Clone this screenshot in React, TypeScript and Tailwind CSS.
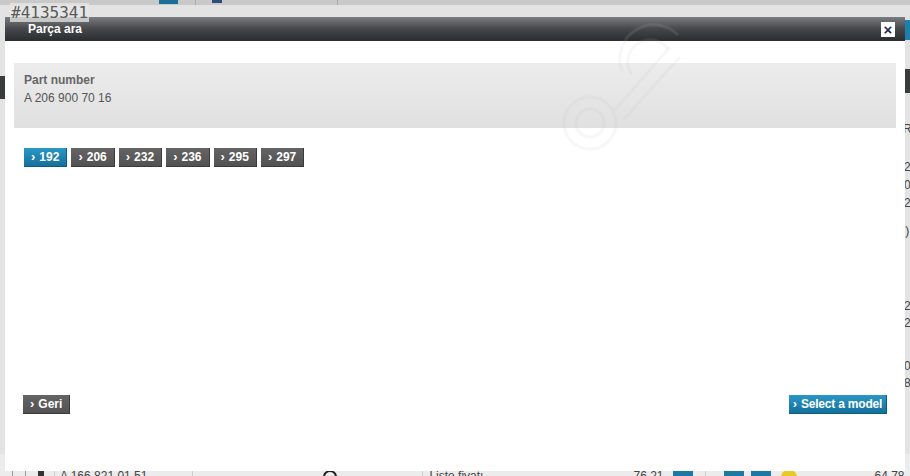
import React from 'react';

const models = ['192', '206', '232', '236', '295', '297'];

const NavButton: React.FC<{ label: string; active?: boolean; className?: string }> = ({ label, active, className }) => (
    <button
        className={
            'h-[19px] flex items-center justify-center gap-[4px] text-[12px] font-bold text-white leading-none border-b border-r ' +
            (active
                ? 'bg-gradient-to-b from-[#2a97c4] to-[#14719c] border-[#0e5a7e]'
                : 'bg-gradient-to-b from-[#646464] to-[#525252] border-[#3a3a3a]') +
            (className ? ' ' + className : ' px-[7px]')
        }
    >
        <span className="text-[13px] -mt-[1px]">›</span>
        <span>{label}</span>
    </button>
);

const Watermark: React.FC = () => (
    <svg className="absolute left-[505px] top-[-8px] pointer-events-none" width="190" height="150" viewBox="0 0 190 150" fill="none">
        <g stroke="rgba(190,190,190,0.13)" strokeWidth="3">
            <path d="M112 62 A34 34 0 0 1 168 26" />
            <path d="M122 66 A22 22 0 0 1 158 40" />
            <path d="M160 38 L104 102" />
            <path d="M170 48 L114 110" />
            <circle cx="80" cy="114" r="26" />
            <circle cx="80" cy="114" r="14" />
        </g>
    </svg>
);

const App: React.FC = () => {
    return (
        <div className="relative w-[910px] h-[476px] overflow-hidden bg-[#e3e3e3] font-['Liberation_Sans',Arial,sans-serif]">
            {/* page behind the dialog */}
            <div className="flex flex-col h-full">
                <div className="h-[5px] bg-[#c9c9c9] flex items-start shrink-0">
                    <div className="ml-[159px] w-[19px] h-[4px] bg-[#1b6f98]" />
                    <div className="ml-[17px] w-px h-[5px] bg-[#aaa]" />
                    <div className="ml-[16px] w-[10px] h-[3px] bg-[#2b4f7a]" />
                    <div className="ml-[115px] w-px h-[5px] bg-[#aaa]" />
                </div>
                <div className="flex-1 flex justify-between">
                    <div className="w-[5px] pt-[71px]">
                        <div className="h-[23px] bg-[#3a3b3d]" />
                    </div>
                    <div className="w-[5px] flex flex-col text-[12px] text-[#444] overflow-hidden">
                        <div className="mt-[15px] h-[20px] bg-[#1d7fad]" />
                        <div className="mt-[29px] h-[24px] bg-[#3a3b3d]" />
                        <div className="mt-[27px] -ml-[2px]">R</div>
                        <div className="mt-[20px] -ml-[1px] leading-[18px]">2<br />0<br />2</div>
                        <div className="mt-[10px] -ml-[3px]">:)</div>
                        <div className="mt-[58px] -ml-[1px] leading-[17px]">2<br />2</div>
                        <div className="mt-[26px] -ml-[1px] leading-[17px]">0<br />8</div>
                    </div>
                </div>
                <div className="h-[22px] shrink-0 bg-[#ececec] flex items-start whitespace-nowrap text-[12px] text-[#444] leading-none pt-[16px] [&>*]:shrink-0">
                    <div className="ml-[12px] w-px h-[14px] bg-[#999]" />
                    <div className="ml-[12px] w-px h-[14px] bg-[#999]" />
                    <div className="ml-[12px] w-[6px] h-[8px] bg-[#333]" />
                    <div className="ml-[10px] w-px h-[14px] bg-[#ccc]" />
                    <span className="ml-[5px]">A 166 821 01 51</span>
                    <div className="ml-[45px] w-px h-[14px] bg-[#ccc]" />
                    <div className="ml-[130px] w-[14px] h-[14px] rounded-full border-2 border-[#222]" />
                    <div className="ml-[85px] w-px h-[14px] bg-[#ccc]" />
                    <span className="ml-[6px]">Liste fiyatı</span>
                    <span className="ml-[150px]">76,21</span>
                    <div className="ml-[10px] w-[20px] h-[14px] bg-[#1b79a6]" />
                    <div className="ml-[12px] w-px h-[14px] bg-[#ccc]" />
                    <div className="ml-[18px] w-[20px] h-[14px] bg-[#1b79a6]" />
                    <div className="ml-[7px] w-[20px] h-[14px] bg-[#1b79a6]" />
                    <div className="ml-[10px] w-[16px] h-[14px] rounded-full bg-[#e9c928]" />
                    <span className="ml-[77px]">64,78</span>
                </div>
            </div>

            <div className="absolute left-[10px] top-[3px] z-20 px-[1px] bg-[rgba(230,230,230,0.75)] font-['DejaVu_Sans_Mono',monospace] text-[16px] leading-[19px] text-[#5a5a5a]">
                #4135341
            </div>

            {/* dialog */}
            <div className="absolute left-[5px] top-[17px] w-[900px] h-[454px] bg-white flex flex-col overflow-hidden">
                <div className="h-[24px] shrink-0 bg-gradient-to-b from-[#7a7d81] via-[#45474a] to-[#2a2c2f] flex items-center justify-between pl-[23px] pr-[10px]">
                    <span className="text-white text-[12px] font-bold">Parça ara</span>
                    <button className="w-[14px] h-[15px] bg-white flex items-center justify-center text-[#23285a] text-[15px] font-bold leading-none">×</button>
                </div>

                <div className="flex-1 flex flex-col pt-[22px] px-[9px] pb-[57px]">
                    <div className="h-[65px] bg-gradient-to-b from-[#ececec] to-[#e0e0e0] pl-[10px] pt-[8px] text-[12px] leading-[18px]">
                        <div className="font-bold text-[#666]">Part number</div>
                        <div className="text-[#555]">A 206 900 70 16</div>
                    </div>

                    <div className="flex gap-[4px] mt-[20px] pl-[10px]">
                        {models.map((m, i) => (
                            <NavButton key={m} label={m} active={i === 0} />
                        ))}
                    </div>

                    <div className="mt-auto flex justify-between pl-[9px] pr-[9px]">
                        <NavButton label="Geri" />
                        <NavButton label="Select a model" active className="w-[98px] tracking-[-0.2px]" />
                    </div>
                </div>
                <Watermark />
            </div>
        </div>
    );
};

export default App;
